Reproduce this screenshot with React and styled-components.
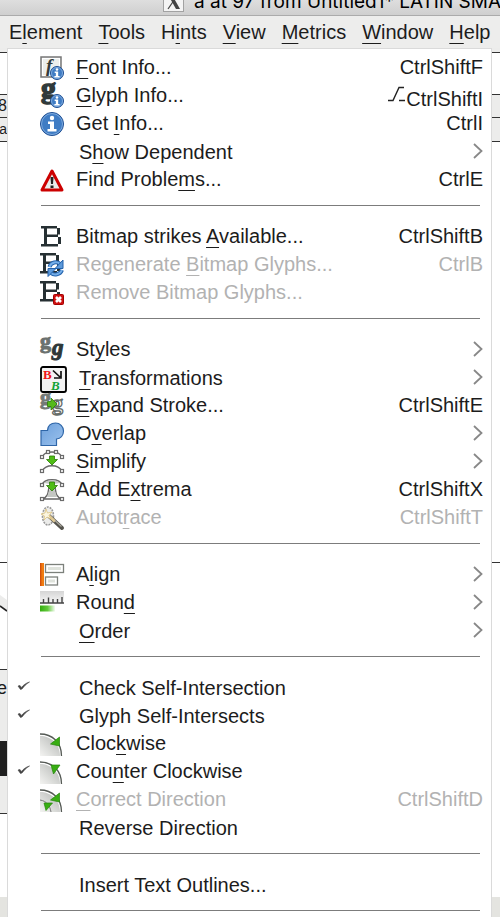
import React from "react";
import styled, { createGlobalStyle, css } from "styled-components";

const GlobalStyle = createGlobalStyle`
  *, *::before, *::after { box-sizing: border-box; }
  body {
    margin: 0;
    background: #fff;
    overflow: hidden;
    font-family: "Liberation Sans", Arial, sans-serif;
    color: #1c1c1c;
  }
  button { font: inherit; color: inherit; }
`;

const Window = styled.main`
  display: flex;
  flex-direction: column;
  height: 100vh;
  overflow: hidden;
`;

const TitleBar = styled.header`
  display: flex;
  align-items: flex-end;
  flex: none;
  gap: 10px;
  height: 16px;
  padding-left: 163px;
  overflow: hidden;
  white-space: pre;
  background: linear-gradient(#dedede, #cfcfcf);
  border-bottom: 1px solid #ababab;
`;

const TitleIcon = styled.svg`
  flex: none;
  width: 21px;
  height: 24px;
  margin-bottom: 3px;
`;

const Title = styled.h1`
  margin: 0 0 1px;
  font: 400 19px/24px Inter, sans-serif;
  color: #000;
`;

const MenuBar = styled.nav`
  display: flex;
  flex: none;
  gap: 16px;
  height: 32px;
  padding: 0 9px;
  background: #ededec;
`;

const MenuBarItem = styled.button`
  padding: 0;
  border: 0;
  background: none;
  font-size: 20px;
  line-height: 28px;
`;

const Mnemonic = styled.span`
  text-decoration: underline;
  text-decoration-thickness: 1px;
  text-underline-offset: 4px;
  text-decoration-skip-ink: none;
`;

const Workspace = styled.div`
  display: grid;
  grid-template-columns: 7px minmax(0, 1fr) 8px;
  flex: 1;
  min-height: 0;
`;

const Strip = styled.div`
  display: flex;
  flex-direction: column;
  overflow: hidden;
`;

const Band = styled.div`
  display: flex;
  justify-content: flex-end;
  align-items: flex-end;
  flex: ${(p) => (p.$h ? "none" : "1")};
  height: ${(p) => (p.$h ? p.$h + "px" : "auto")};
  background: ${(p) => p.$fill || "#fff"};
  border-bottom: ${(p) => (p.$line ? "1px solid #333" : "0")};
  font-size: ${(p) => p.$font || 16}px;
  line-height: ${(p) => p.$h || 16}px;
  overflow: hidden;

  svg { display: block; }
`;

const Menu = styled.div`
  align-self: stretch;
  padding-top: 4px;
  border: solid #dadada;
  border-width: 1px 1px 0;
  background: #fff;
  overflow: hidden;
`;

const Row = styled.button`
  display: grid;
  grid-template-columns: 32px 36px minmax(0, 1fr) auto;
  width: 100%;
  height: 28px;
  padding: 0 8px 0 0;
  border: 0;
  background: none;
  text-align: left;
  white-space: nowrap;
  line-height: 28px;

  &:disabled { color: #b2b2b2; }
`;

const CheckCell = styled.span`
  padding: 6px 0 0 9px;
  svg { display: block; }
`;

const IconCell = styled.span`
  padding-top: 3px;
  svg { display: block; overflow: visible; }
`;

const Label = styled.span`
  font-size: 20px;
  ${(p) => p.$inset && css`padding: 1px 0 0 3px;`}
`;

const Shortcut = styled.span`
  display: flex;
  font-size: 20px;
  ${(p) => p.$low && css`padding-top: 4px;`}
  svg { display: block; }
`;

const Chevron = styled.svg`
  display: block;
  width: 10px;
  height: 16px;
  margin-top: 6px;
`;

const Divider = styled.hr`
  height: 1px;
  margin: 12px 11px 16px 33px;
  border: 0;
  background: #7c7c7c;
`;

const Svg = ({ children, size = 24, box = 24 }) => (
  <svg width={size} height={size} viewBox={`0 0 ${box} ${box}`} aria-hidden="true">
    {children}
  </svg>
);

const InfoBall = ({ x, y, r }) => (
  <g>
    <circle cx={x} cy={y} r={r - 0.5} fill="#3f7cc4" stroke="#1f4e92" />
    <circle cx={x} cy={y} r={r - 1.5} fill="none" stroke="#8db6e4" strokeWidth="0.8" />
    <g transform={`translate(${x} ${y}) scale(${r / 12})`} fill="#fff">
      <circle cx="0" cy="-6" r="2.2" />
      <path d="M-4-2.5H2V5H4.500V7.500H-4.500V5H-2V0H-4Z" />
    </g>
  </g>
);

const serif = '"Liberation Serif", serif';

/* Pixel-font capital used by the bitmap strike icons. */
const PixelStrokes = () => (
  <path
    d="M1 1H17V3.500H1ZM4 3H7V20H4ZM17 3H20V9.500H17ZM7 9.500H18V12H7ZM18 12H21V19H18ZM1 19H18V21.500H1Z"
    fill="#263033"
  />
);

const Quarter = () => (
  <g>
    <path d="M0 4C11 4 20 12 20 24H0Z" fill="url(#quarterFill)" />
    <path d="M0 2C12 2 21.500 10 21.500 24" fill="none" stroke="#555a55" strokeWidth="1.3" />
  </g>
);

const Node = ({ x, y }) => (
  <rect x={x - 1.5} y={y - 1.5} width="3" height="3" fill="#fff" stroke="#6b6b6b" strokeWidth="1.2" />
);

const DownArrow = ({ y }) => (
  <path
    d={`M9.500 ${y}H14.500V${y + 3.5}H17.500L12 ${y + 9}L6.500 ${y + 3.5}H9.500Z`}
    fill="#4fbd16"
    stroke="#2b7a08"
    strokeWidth="0.8"
  />
);

const icons = {
  fontInfo: (
    <Svg>
      <rect x="1" y="1" width="20" height="20" fill="#eceeec" stroke="#777" strokeWidth="1.5" />
      <rect x="2.5" y="2.5" width="17" height="17" fill="none" stroke="#fff" />
      <text x="6" y="16" fontFamily={serif} fontStyle="italic" fontWeight="700" fontSize="19" fill="#333b3b">f</text>
      <InfoBall x={17} y={17} r={7} />
    </Svg>
  ),
  glyphInfo: (
    <Svg>
      <text x="1" y="14" fontFamily={serif} fontWeight="700" fontSize="30" fill="#303a3b" stroke="#303a3b" strokeWidth="1.5">g</text>
      <InfoBall x={17} y={17} r={7} />
    </Svg>
  ),
  info: (
    <Svg>
      <InfoBall x={12} y={12} r={12} />
    </Svg>
  ),
  warning: (
    <Svg>
      <path d="M12 3L22 22H2Z" fill="#e9eceb" stroke="#c00" strokeWidth="3" strokeLinejoin="round" />
      <path d="M10.500 9H13.500L13 16H11Z" fill="#222" />
      <rect x="10.5" y="17.5" width="3" height="2.5" fill="#222" />
    </Svg>
  ),
  bitmap: (
    <Svg>
      <PixelStrokes />
    </Svg>
  ),
  bitmapRefresh: (
    <Svg>
      <g transform="translate(-1 -1)"><PixelStrokes /></g>
      <path d="M9.500 14C11 9 17 8 20 11" fill="none" stroke="#2463ad" strokeWidth="4" />
      <path d="M9.500 14C11 9 17 8 20 11" fill="none" stroke="#75aee8" strokeWidth="2" />
      <path d="M23 7V15.500H15Z" fill="#5c99da" stroke="#2463ad" />
      <path d="M22 17C20 22 14 22.500 11 20" fill="none" stroke="#2463ad" strokeWidth="4" />
      <path d="M22 17C20 22 14 22.500 11 20" fill="none" stroke="#75aee8" strokeWidth="2" />
      <path d="M8 23.500V15.500H16Z" fill="#5c99da" stroke="#2463ad" />
    </Svg>
  ),
  bitmapRemove: (
    <Svg>
      <g transform="translate(-1 -1)"><PixelStrokes /></g>
      <rect x="13.5" y="13.5" width="10" height="10" rx="1" fill="#cf1111" stroke="#a40000" />
      <path d="M16 16L21 21M21 16L16 21" stroke="#fff" strokeWidth="2.6" />
    </Svg>
  ),
  styles: (
    <Svg>
      <text x="0" y="10" fontFamily={serif} fontWeight="700" fontSize="22" fill="#6b716f" stroke="#6b716f">g</text>
      <text x="12" y="17" fontFamily={serif} fontWeight="700" fontStyle="italic" fontSize="23" fill="#2d3738" stroke="#2d3738">g</text>
    </Svg>
  ),
  transform: (
    <Svg size={27} box={27}>
      <rect x="1" y="1" width="25" height="25" rx="2" fill="#f3f3f3" stroke="#000" strokeWidth="1.8" />
      <text x="3" y="13" fontFamily={serif} fontWeight="700" fontSize="13" fill="#f01818">B</text>
      <text x="11" y="24" fontFamily={serif} fontWeight="700" fontStyle="italic" fontSize="13" fill="#12a336">B</text>
      <path d="M13 4.500L20 11M21 5V12H14" fill="none" stroke="#111" strokeWidth="1.7" />
    </Svg>
  ),
  expand: (
    <Svg>
      <text x="0" y="10" fontFamily={serif} fontWeight="700" fontSize="22" fill="#747a77" stroke="#747a77">g</text>
      <text x="12" y="16" fontFamily={serif} fontWeight="700" fontSize="22" fill="#fff" stroke="#666c69" strokeWidth="1.3">g</text>
      <path d="M7.500 7.500H11V4L17 10L11 16V12.500H7.500Z" fill="#55b91c" stroke="#2d7c0b" strokeWidth="0.8" />
    </Svg>
  ),
  overlap: (
    <Svg>
      <path
        d="M1 8.500H7.500C7.500 3.500 11 1 15.500 1C20 1 23.500 4.500 23.500 9C23.500 13.500 20.500 16.500 16.500 17V23.500H1Z"
        fill="url(#overlapFill)"
        stroke="#2f66a8"
        strokeWidth="1.2"
      />
    </Svg>
  ),
  simplify: (
    <Svg>
      <path d="M2 7C5 2 8 2 12 2S19 2 22 7M2 21C6 14 18 14 22 21" fill="none" stroke="#666" strokeWidth="1.3" />
      <Node x={2} y={7} /><Node x={8} y={2} /><Node x={16} y={2} /><Node x={22} y={7} />
      <Node x={2} y={21} /><Node x={22} y={21} />
      <DownArrow y={6} />
    </Svg>
  ),
  extrema: (
    <Svg>
      <path d="M2 7C4 0 20 0 22 7M2 21C9 19 8 13 9 9M22 21C15 19 16 13 15 9M2 21H22" fill="none" stroke="#666" strokeWidth="1.4" />
      <path d="M4 5C8 1 16 1 20 5L14 6H10ZM10 10H14L17 19H7Z" fill="#c4c7c3" />
      <Node x={2} y={7} /><Node x={22} y={7} /><Node x={2} y={21} /><Node x={22} y={21} />
      <DownArrow y={4} />
    </Svg>
  ),
  autotrace: (
    <Svg>
      <ellipse cx="8" cy="10" rx="5.5" ry="9" fill="#ececea" stroke="#999" strokeWidth="1.6" strokeDasharray="2 1" />
      <path d="M9 10L22 22" stroke="#55534d" strokeWidth="4" strokeLinecap="round" />
      <path d="M8 9L15 15.500" stroke="#dfc894" strokeWidth="3" />
      <path d="M15 14.500L21.500 20.500" stroke="#aaa79c" strokeWidth="1.2" />
      <path d="M6 3L7.500 7L12 6L9 9.500L11 13L7 11L4 14L4.500 10L1 8L5 7Z" fill="#fbf5df" stroke="#d9bd75" strokeWidth="0.7" />
    </Svg>
  ),
  align: (
    <Svg>
      <rect x="0" y="0" width="4" height="23" fill="#f07c12" />
      <path d="M0.700 0V23" stroke="#d3500b" strokeWidth="1.4" />
      <rect x="5.5" y="1.5" width="18" height="8" fill="#fff" stroke="#7c807b" strokeWidth="1.3" />
      <rect x="8" y="4" width="13" height="3" fill="#dfe3dc" />
      <rect x="5.5" y="14" width="12" height="8" fill="#fff" stroke="#7c807b" strokeWidth="1.3" />
      <rect x="8" y="16.5" width="7" height="3" fill="#dfe3dc" />
    </Svg>
  ),
  round: (
    <Svg>
      <rect width="24" height="12" fill="url(#rulerFill)" />
      <path d="M0 12H24M3.500 8V12M8.500 6.500V12M13 8V12M17.500 8V12M22 6V12" stroke="#444" strokeWidth="1.4" />
      <rect y="14.5" width="15" height="6" fill="url(#greenFade)" />
    </Svg>
  ),
  clockwise: (
    <Svg>
      <Quarter />
      <path d="M19.500 5V14L10.500 12Z" fill="#38ad12" stroke="#24850a" strokeWidth="0.7" />
    </Svg>
  ),
  counter: (
    <Svg>
      <Quarter />
      <path d="M11 5H20L13.500 14Z" fill="#38ad12" stroke="#24850a" strokeWidth="0.7" />
    </Svg>
  ),
  correct: (
    <Svg>
      <Quarter />
      <path d="M0 12C7 13 10 18 11 24" fill="none" stroke="#777" />
      <path d="M19.500 5V14L10.500 12ZM4 15H12.500L6 22.500Z" fill="#38ad12" stroke="#24850a" strokeWidth="0.7" />
    </Svg>
  ),
};

const Defs = styled.svg`
  position: absolute;
  width: 0;
  height: 0;
`;

const Gradients = () => (
  <Defs aria-hidden="true">
    <defs>
      <linearGradient id="overlapFill" x2="1" y2="1">
        <stop stopColor="#6c9fdb" /><stop offset="1" stopColor="#9cc3ee" />
      </linearGradient>
      <linearGradient id="rulerFill" x2="0" y2="1">
        <stop stopColor="#d5d5d5" /><stop offset="1" stopColor="#f7f7f7" />
      </linearGradient>
      <linearGradient id="greenFade">
        <stop stopColor="#35ad10" /><stop offset="0.5" stopColor="#62c93b" /><stop offset="1" stopColor="#f2fbef" />
      </linearGradient>
      <linearGradient id="quarterFill" x1="1" x2="0" y2="1">
        <stop stopColor="#b2b5b2" /><stop offset="1" stopColor="#f4f4f2" />
      </linearGradient>
    </defs>
  </Defs>
);

/* An underscore marks the letter that follows it as the mnemonic. */
function MnemonicText({ text }) {
  const at = text.indexOf("_");
  if (at < 0) return text;
  return (
    <>
      {text.slice(0, at)}
      <Mnemonic>{text[at + 1]}</Mnemonic>
      {text.slice(at + 2)}
    </>
  );
}

const bar = ["E_lement", "_Tools", "H_ints", "_View", "_Metrics", "_Window", "_Help"];

const entries = [
  { label: "_Font Info...", icon: "fontInfo", keys: "CtrlShiftF" },
  { label: "_Glyph Info...", icon: "glyphInfo", keys: "CtrlShiftI", alt: true },
  { label: "Get _Info...", icon: "info", keys: "CtrlI" },
  { label: "S_how Dependent", submenu: true },
  { label: "Find Proble_ms...", icon: "warning", keys: "CtrlE" },
  null,
  { label: "Bitmap strikes _Available...", icon: "bitmap", keys: "CtrlShiftB" },
  { label: "Regenerate _Bitmap Glyphs...", icon: "bitmapRefresh", keys: "CtrlB", disabled: true },
  { label: "Remove Bitmap Glyphs...", icon: "bitmapRemove", disabled: true },
  null,
  { label: "St_yles", icon: "styles", submenu: true },
  { label: "_Transformations", icon: "transform", submenu: true, inset: true },
  { label: "_Expand Stroke...", icon: "expand", keys: "CtrlShiftE" },
  { label: "O_verlap", icon: "overlap", submenu: true },
  { label: "_Simplify", icon: "simplify", submenu: true },
  { label: "Add E_xtrema", icon: "extrema", keys: "CtrlShiftX" },
  { label: "Autot_race", icon: "autotrace", keys: "CtrlShiftT", disabled: true },
  null,
  { label: "A_lign", icon: "align", submenu: true },
  { label: "Roun_d", icon: "round", submenu: true },
  { label: "_Order", submenu: true },
  null,
  { label: "Check Self-Intersection", checked: true },
  { label: "Glyph Self-Intersects", checked: true },
  { label: "Cloc_kwise", icon: "clockwise", checked: false },
  { label: "Cou_nter Clockwise", icon: "counter", checked: true },
  { label: "_Correct Direction", icon: "correct", keys: "CtrlShiftD", disabled: true },
  { label: "Reverse Direction" },
  null,
  { label: "Insert Text Outlines..." },
  null,
];

function MenuRow({ item }) {
  const checkable = item.checked !== undefined;
  return (
    <Row
      type="button"
      role={checkable ? "menuitemcheckbox" : "menuitem"}
      aria-checked={checkable ? item.checked : undefined}
      aria-haspopup={item.submenu ? "menu" : undefined}
      disabled={item.disabled}
    >
      <CheckCell>
        {item.checked && (
          <svg width="13" height="14" viewBox="0 0 13 14" aria-hidden="true">
            <path d="M1 7L3.500 10.500L5 10C7 7.500 9 5 12.500 3C9 4 6.500 6 4.300 8.500L3 6.500Z" fill="#444" stroke="#444" strokeWidth="0.6" />
          </svg>
        )}
      </CheckCell>
      <IconCell>{icons[item.icon]}</IconCell>
      <Label $inset={!item.icon || item.inset}><MnemonicText text={item.label} /></Label>
      {item.keys && (
        <Shortcut $low={item.alt}>
          {item.alt && (
            <svg width="18" height="20" viewBox="0 0 18 20" aria-label="Alt">
              <path d="M0 15.500H5L11 2.500H16M11 15.500H17" fill="none" stroke="#222" strokeWidth="1.4" />
            </svg>
          )}
          {item.keys}
        </Shortcut>
      )}
      {item.submenu && (
        <Chevron viewBox="0 0 10 16" aria-hidden="true">
          <path d="M1 1L8.500 8L1 15" fill="none" stroke="#888" strokeWidth="1.8" />
        </Chevron>
      )}
    </Row>
  );
}

const shade = "#ececeb";

export default function App() {
  return (
    <Window>
      <GlobalStyle />
      <Gradients />
      <TitleBar>
        <TitleIcon viewBox="0 0 21 24" aria-hidden="true">
          <rect x="0.5" y="0.5" width="20" height="23" fill="#f4f4f4" stroke="#a2a2a2" />
          <path d="M4 5H8L17 21H13Z" fill="#444" />
          <path d="M16 5L5 21" stroke="#444" strokeWidth="1.2" />
        </TitleIcon>
        <Title>a at 97 from Untitled1* LATIN SMALL LETTER A</Title>
      </TitleBar>
      <MenuBar aria-label="Main menu">
        {bar.map((name) => (
          <MenuBarItem type="button" key={name}><MnemonicText text={name} /></MenuBarItem>
        ))}
      </MenuBar>
      <Workspace>
        <Strip>
          <Band $h={5} $fill={shade} $line />
          <Band $h={42} $line />
          <Band $h={23} $fill={shade} $line>8</Band>
          <Band $h={24} $fill={shade} $line $font={14}>a</Band>
          <Band $h={421} $line />
          <Band $h={107} $line>
            <svg width="7" height="74" viewBox="0 0 7 74" aria-hidden="true">
              <path d="M0 0L7 5V16L0 11Z" fill="#ececeb" />
              <path d="M0 11L7 16" stroke="#222" strokeWidth="1.6" />
            </svg>
          </Band>
          <Band $h={36} $fill={shade} $font={18}>e</Band>
          <Band $h={35} $fill={shade} />
          <Band $h={35} $fill="#202020" />
          <Band $h={38} $fill={shade} $line />
          <Band $h={83} />
          <Band $fill="#e4e4e0" />
        </Strip>
        <Menu role="menu" aria-label="Element">
          {entries.map((item, i) => (item ? <MenuRow key={i} item={item} /> : <Divider key={i} />))}
        </Menu>
        <Strip>
          <Band $h={5} $fill={shade} $line />
          <Band $h={42} $line />
          <Band $h={23} $fill={shade} $line />
          <Band $h={24} $fill={shade} $line />
          <Band $h={421} $line />
          <Band $h={334} />
          <Band $fill="#e4e4e0" />
        </Strip>
      </Workspace>
    </Window>
  );
}
